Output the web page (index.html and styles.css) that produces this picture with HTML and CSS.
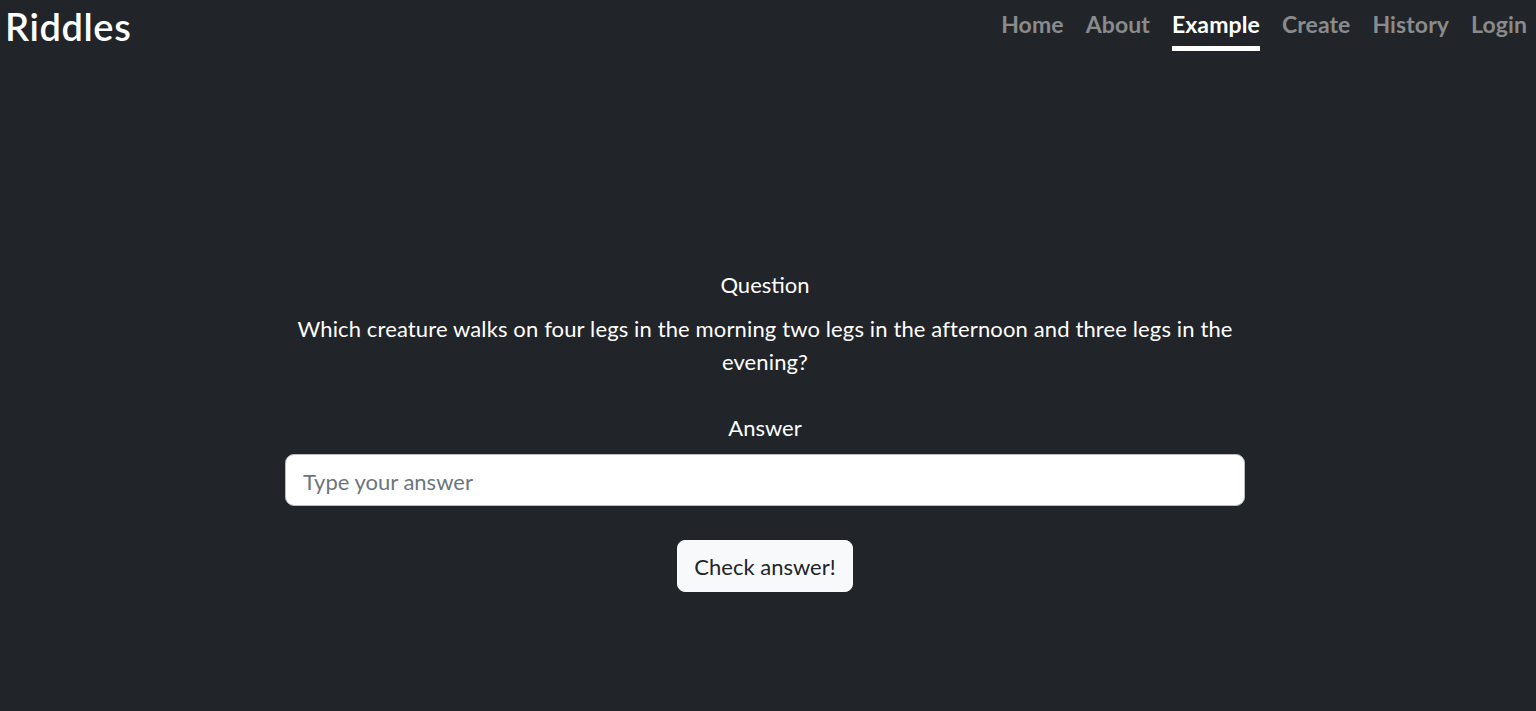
FILE: index.html
```html
<!DOCTYPE html>
<html lang="en">
<head>
<meta charset="utf-8">
<title>Riddles</title>
<link rel="stylesheet" href="styles.css">
</head>
<body>
<header class="topbar">
  <a class="brand" href="#">Riddles</a>
  <nav class="nav">
    <a class="nav-link" href="#">Home</a>
    <a class="nav-link" href="#">About</a>
    <a class="nav-link active" href="#">Example</a>
    <a class="nav-link" href="#">Create</a>
    <a class="nav-link" href="#">History</a>
    <a class="nav-link" href="#">Login</a>
  </nav>
</header>
<main class="main">
  <div class="riddle">
    <div class="label">Question</div>
    <p class="question">Which creature walks on four legs in the morning two legs in the afternoon and three legs in the evening?</p>
    <label class="label answer-label" for="answer">Answer</label>
    <input id="answer" class="answer-input" type="text" placeholder="Type your answer">
    <button class="btn-check" type="button">Check answer!</button>
  </div>
</main>
</body>
</html>
```

FILE: styles.css
```css
html, body {
  margin: 0;
  padding: 0;
}
body {
  background: #212529;
  color: #ffffff;
  font-family: Lato, "Open Sans", "Noto Sans", sans-serif;
  min-height: 711px;
}
.topbar {
  display: flex;
  justify-content: space-between;
  align-items: flex-start;
  padding: 0 9px 0 5px;
  height: 60px;
}
.brand {
  color: #ffffff;
  text-decoration: none;
  font-size: 38px;
  font-weight: 600;
  letter-spacing: 0.6px;
  line-height: 52px;
}
.nav {
  display: flex;
  gap: 22px;
  padding-top: 7px;
}
.nav-link {
  color: #8a8b8d;
  text-decoration: none;
  font-size: 23px;
  font-weight: 700;
  letter-spacing: 0.1px;
  line-height: 34px;
  padding-bottom: 5px;
  border-bottom: 5px solid transparent;
}
.nav-link.active {
  color: #ffffff;
  border-bottom-color: #ffffff;
}
.main {
  display: flex;
  justify-content: center;
  padding: 208px 6px 0 0;
}
.riddle {
  width: 960px;
  display: flex;
  flex-direction: column;
  align-items: center;
  text-align: center;
  font-size: 22px;
  line-height: 33px;
}
.label {
  display: block;
}
.question {
  margin: 11px 0 0;
  max-width: 945px;
  letter-spacing: 0.13px;
}
.answer-label {
  margin-top: 33px;
}
.answer-input {
  margin-top: 10px;
  width: 960px;
  height: 52px;
  box-sizing: border-box;
  border: 1px solid #b9bcc0;
  border-radius: 9px;
  background: #ffffff;
  padding: 3px 17px 0;
  font-family: inherit;
  font-size: 22px;
  color: #212529;
}
.answer-input::placeholder {
  color: #6c757d;
}
.btn-check {
  margin-top: 34px;
  height: 52px;
  padding: 0 16px;
  border: 1px solid #f8f9fa;
  border-radius: 8px;
  background: #f8f9fa;
  color: #212529;
  font-family: inherit;
  font-size: 22px;
}
```
